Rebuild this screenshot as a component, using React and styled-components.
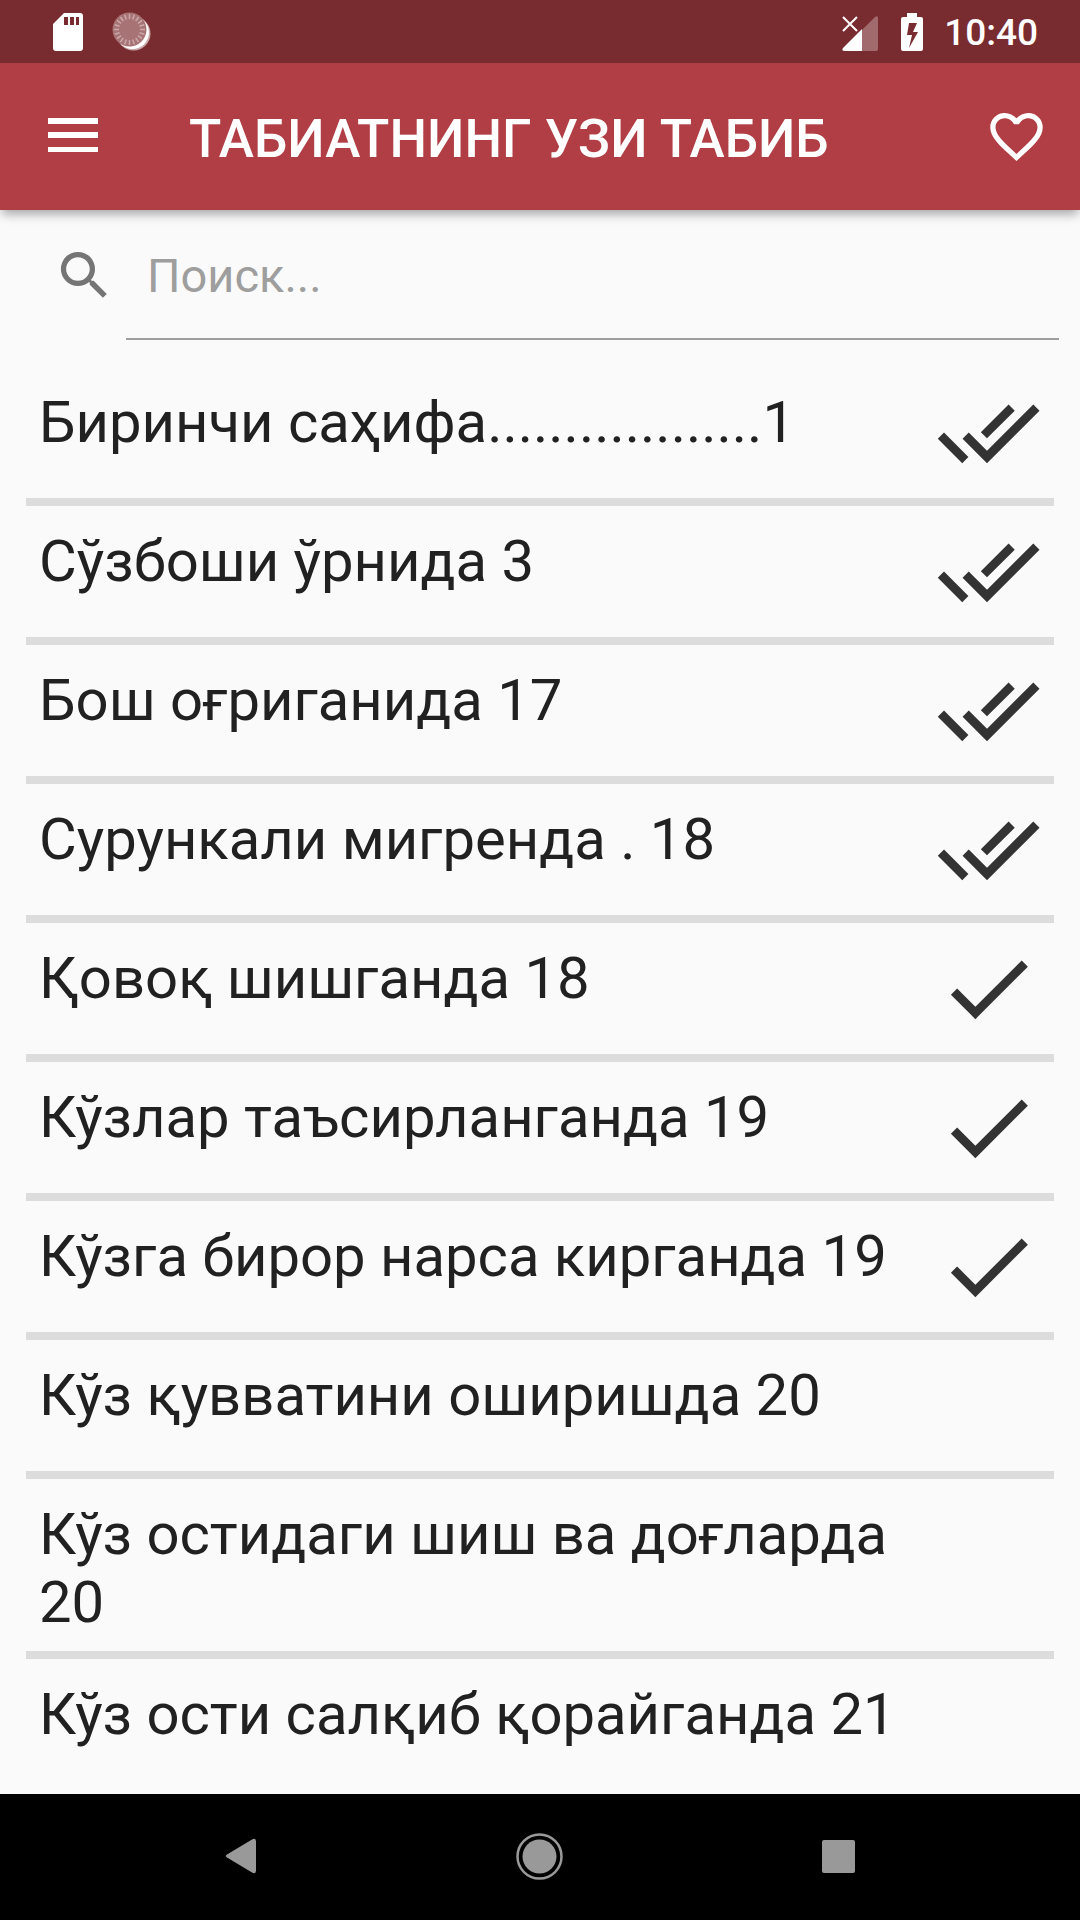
import React, { useState } from "react";
import styled, { createGlobalStyle } from "styled-components";
import { MdCheck, MdDoneAll, MdFavoriteBorder, MdSearch } from "react-icons/md";

const chapters = [
  { title: "Биринчи саҳифа..................1", status: "done" },
  { title: "Сўзбоши ўрнида 3", status: "done" },
  { title: "Бош оғриганида 17", status: "done" },
  { title: "Сурункали мигренда . 18", status: "done" },
  { title: "Қовоқ шишганда 18", status: "read" },
  { title: "Кўзлар таъсирланганда 19", status: "read" },
  { title: "Кўзга бирор нарса кирганда 19", status: "read" },
  { title: "Кўз қувватини оширишда 20" },
  { title: "Кўз остидаги шиш ва доғларда 20" },
  { title: "Кўз ости салқиб қорайганда 21" },
];

const ticks = Array.from({ length: 20 }, (_, i) => i * 18);

const StatusBar = () => (
  <StatusWrapper>
    <StatusGroup $gap="28px">
      <svg width="32" height="40" viewBox="0 0 32 40">
        <path
          fill="#fff"
          fillRule="evenodd"
          d="M12 1h16a3 3 0 0 1 3 3v32a3 3 0 0 1-3 3H4a3 3 0 0 1-3-3V12zM12 5v8h4V5zm6 0v8h4V5zm6 0v8h3V5z"
        />
      </svg>
      <svg width="40" height="40" viewBox="0 0 40 40">
        <circle cx="21.5" cy="21.5" r="17" fill="#c9a9aa" />
        <circle cx="20.5" cy="20.5" r="16.5" fill="#fff" />
        <circle cx="17.5" cy="17.5" r="17" fill="#a87375" />
        {ticks.map((angle) => (
          <path
            key={angle}
            d="M17.5 2v5"
            stroke="#c9a9aa"
            strokeWidth="1.5"
            transform={`rotate(${angle} 17.5 17.5)`}
          />
        ))}
      </svg>
    </StatusGroup>
    <StatusGroup $gap="20px">
      <svg width="38" height="40" viewBox="0 0 38 40">
        <path fill="#fff" fillOpacity=".3" d="M20 18 33 5q3-2 3 1v31q0 2-2 2H20z" />
        <path fill="#fff" d="M20 17v22H3q-4 0-2-3z" />
        <path stroke="#fff" strokeWidth="2" d="m1 5 14 14M15 5 1 19" />
      </svg>
      <svg width="24" height="40" viewBox="0 0 24 40">
        <path
          fill="#fff"
          fillRule="evenodd"
          d="M7 1h10v4h4q2 0 2 2v30q0 2-2 2H3q-2 0-2-2V7q0-2 2-2h4zM9 11 7 23h5l-3 13 9-16h-5l4-9z"
        />
      </svg>
      <Clock>10:40</Clock>
    </StatusGroup>
  </StatusWrapper>
);

const App = () => {
  const [query, setQuery] = useState("");

  const visible = chapters.filter(({ title }) =>
    title.toLowerCase().includes(query.toLowerCase())
  );

  return (
    <Wrapper>
      <GlobalStyle />
      <StatusBar />
      <AppBar>
        <IconButton aria-label="Меню">
          <svg width="63" height="63" viewBox="0 0 63 63">
            <path fill="#fff" d="M6 13h50v6H6zm0 14h50v6H6zm0 15h50v5H6z" />
          </svg>
        </IconButton>
        <Title>ТАБИАТНИНГ УЗИ ТАБИБ</Title>
        <IconButton aria-label="Избранное">
          <MdFavoriteBorder />
        </IconButton>
      </AppBar>
      <Main>
        <Search>
          <MdSearch />
          <SearchInput
            type="text"
            aria-label="Поиск"
            placeholder="Поиск..."
            value={query}
            onChange={(e) => setQuery(e.target.value)}
          />
        </Search>
        <List>
          {visible.map(({ title, status }) => (
            <Item key={title}>
              <ChapterButton>
                <ChapterTitle>{title}</ChapterTitle>
                <Mark>
                  {status === "done" && <MdDoneAll />}
                  {status === "read" && <MdCheck />}
                </Mark>
              </ChapterButton>
            </Item>
          ))}
        </List>
      </Main>
      <NavBar>
        <NavButton aria-label="Назад">
          <svg width="48" height="48" viewBox="0 0 48 48">
            <path
              fill="#999"
              d="M9 21.5 34 6.500q4-2 4 2v29q0 4-4 2L9 24.5q-2.500-1.500 0-3z"
            />
          </svg>
        </NavButton>
        <NavButton aria-label="Домой">
          <svg width="48" height="48" viewBox="0 0 48 48">
            <circle cx="23.5" cy="23.5" r="17" fill="#999" />
            <circle cx="23.5" cy="23.5" r="22" fill="none" stroke="#999" strokeWidth="2.5" />
          </svg>
        </NavButton>
        <NavButton aria-label="Недавние">
          <svg width="48" height="48" viewBox="0 0 48 48">
            <rect x="8" y="7" width="33" height="33" rx="2" fill="#999" />
          </svg>
        </NavButton>
      </NavBar>
    </Wrapper>
  );
};

const GlobalStyle = createGlobalStyle`
  * {
    box-sizing: border-box;
  }
  body {
    margin: 0;
    background: #fafafa;
    font-family: Roboto, "Noto Sans", sans-serif;
  }
  button {
    border: none;
    padding: 0;
    background: transparent;
    font: inherit;
    color: inherit;
    cursor: pointer;
  }
  svg {
    display: block;
    flex-shrink: 0;
  }
`;

const Wrapper = styled.div`
  height: 100vh;
  display: flex;
  flex-direction: column;
`;

const StatusWrapper = styled.div`
  height: 63px;
  flex-shrink: 0;
  display: flex;
  justify-content: space-between;
  align-items: center;
  padding: 0 42px 0 52px;
  background: #792c2f;
`;

const StatusGroup = styled.div`
  display: flex;
  align-items: center;
  gap: ${({ $gap }) => $gap};
`;

const Clock = styled.span`
  padding-top: 2px;
  font-size: 37px;
  line-height: 40px;
  font-weight: 500;
  color: #fff;
`;

const AppBar = styled.header`
  height: 147px;
  flex-shrink: 0;
  position: relative;
  display: flex;
  align-items: center;
  gap: 84px;
  padding: 0 32px 0 42px;
  background: #b13e45;
  color: #fff;
  box-shadow: 0 6px 10px -2px rgba(0, 0, 0, 0.35);
`;

const IconButton = styled.button`
  svg {
    width: 63px;
    height: 63px;
  }
`;

const Title = styled.h1`
  flex: 1;
  margin: 0;
  padding-top: 4px;
  font-size: 53px;
  line-height: 62px;
  font-weight: 500;
  white-space: nowrap;
`;

const Main = styled.main`
  flex: 1;
  min-height: 0;
  overflow: hidden;
`;

const Search = styled.label`
  display: flex;
  align-items: center;
  gap: 10px;
  padding: 0 21px 0 53px;
  color: #757575;
  svg {
    width: 63px;
    height: 63px;
  }
`;

const SearchInput = styled.input`
  flex: 1;
  min-width: 0;
  height: 130px;
  padding: 2px 21px 0;
  border: none;
  border-bottom: 2px solid #9e9e9e;
  outline: none;
  background: transparent;
  font-family: inherit;
  font-size: 47px;
  color: #212121;
  &::placeholder {
    color: #9e9e9e;
    opacity: 1;
  }
`;

const List = styled.ul`
  list-style: none;
  margin: 27px 26px 0;
  padding: 0;
`;

const Item = styled.li`
  border-bottom: 8px solid #dcdcdc;
  &:last-child {
    border-bottom: none;
  }
`;

const ChapterButton = styled.button`
  width: 100%;
  display: flex;
  align-items: flex-start;
  padding: 13px;
  text-align: left;
`;

const ChapterTitle = styled.span`
  flex: 1;
  padding: 8px 0 2px;
  font-size: 58px;
  line-height: 68px;
  color: #212121;
`;

const Mark = styled.span`
  width: 105px;
  height: 105px;
  color: #333;
  svg {
    width: 105px;
    height: 105px;
  }
`;

const NavBar = styled.nav`
  height: 126px;
  flex-shrink: 0;
  display: flex;
  padding: 0 93px;
  background: #000;
`;

const NavButton = styled.button`
  flex: 1;
  display: flex;
  justify-content: center;
  align-items: center;
`;

export default App;
